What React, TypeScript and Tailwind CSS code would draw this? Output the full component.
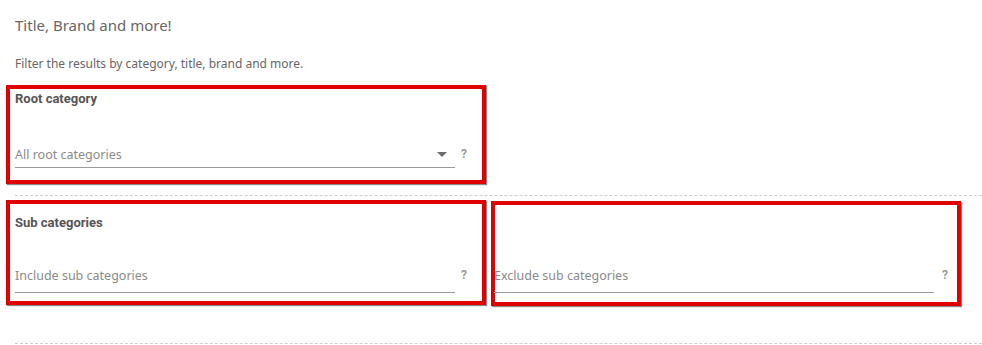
import React from "react";

type FieldProps = {
    placeholder: string;
    dropdown?: boolean;
    helpGap?: string;
    height?: string;
};

function Field({ placeholder, dropdown, helpGap = "ml-[6px]", height = "h-[25px]" }: FieldProps) {
    return (
        <div className={`flex ${height}`}>
            <div className="w-[440px] flex items-center justify-between border-b border-[#9a9a9a]">
                <span className="text-[12.5px] leading-[20px] text-[#8a8a8a]">{placeholder}</span>
                {dropdown && (
                    <svg width="10" height="6" viewBox="0 0 10 6" className="mr-[8px]">
                        <path d="M0 0 L10 0 L5 5 Z" fill="#6b6b6b" />
                    </svg>
                )}
            </div>
            <span className={`${helpGap} flex items-center pb-[3px] text-[12px] leading-[16px] font-bold text-[#9a9a9a] font-['Roboto',sans-serif]`}>?</span>
        </div>
    );
}

function App() {
    return (
        <div className="w-[982px] h-[345px] bg-white overflow-hidden font-['Noto_Sans','Open_Sans',sans-serif]">
            <div className="pl-[15px] pt-[15px]">
                <h1 className="text-[15px] leading-[20px] text-[#666]">Title, Brand and more!</h1>
                <p className="mt-[21px] text-[12px] leading-[16px] text-[#666]">
                    Filter the results by category, title, brand and more.
                </p>
            </div>

            <div className="pl-[6px] mt-[13px]">
                <div className="w-[480px] h-[99px] border-4 border-[#e00000] shadow-[1px_1px_1px_#888] pl-[5px] pt-[2px]">
                    <div className="text-[13px] leading-[16px] font-bold text-[#555] font-['Roboto',sans-serif]">Root category</div>
                    <div className="mt-[36px]">
                        <Field placeholder="All root categories" dropdown />
                    </div>
                </div>
            </div>

            <div className="ml-[15px] mt-[11px] border-t border-dashed border-[#cfcfcf]" />

            <div className="pl-[6px] mt-[4px] flex gap-[5px]">
                <div className="w-[480px] h-[105px] border-4 border-[#e00000] shadow-[1px_1px_1px_#888] pl-[5px] pt-[11px]">
                    <div className="text-[13px] leading-[16px] font-bold text-[#555] font-['Roboto',sans-serif]">Sub categories</div>
                    <div className="mt-[29px]">
                        <Field placeholder="Include sub categories" height="h-[33px]" />
                    </div>
                </div>
                <div className="mt-[1px] w-[470px] h-[105px] border-4 border-[#e00000] shadow-[1px_1px_1px_#888] pt-[55px]">
                    <div className="-ml-[1px]">
                        <Field placeholder="Exclude sub categories" helpGap="ml-[8px]" height="h-[33px]" />
                    </div>
                </div>
            </div>

            <div className="ml-[15px] mt-[37px] border-t border-dashed border-[#cfcfcf]" />
        </div>
    );
}

export default App;
